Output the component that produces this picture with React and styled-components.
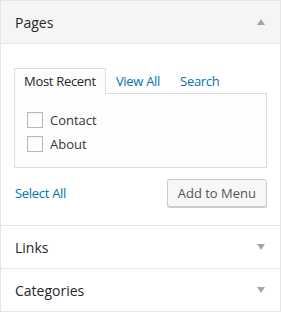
import styled, { createGlobalStyle } from "styled-components";

const Global = createGlobalStyle`
    body{
        margin: 0;
        background: #fff;
        font-family: "Open Sans", "Liberation Sans", sans-serif;
        font-size: 13px;
        color: #444;
    }
`;

const Box = styled.div`
    width: 281px;
    box-sizing: border-box;
    border: 1px solid #e5e5e5;
    background-color: #fff;
`;

const Section = styled.div`
    & + &{
        border-top: 1px solid #e5e5e5;
    }
`;

const Head = styled.div`
    display: flex;
    align-items: center;
    justify-content: space-between;
    height: 42px;
    padding: 0 15px 0 14px;
    background-color: ${p => p.$open ? "#f5f5f5" : "#fff"};
    border-bottom: ${p => p.$open ? "1px solid #e5e5e5" : "none"};
    h3{
        margin: 0;
        font-size: 14px;
        font-weight: 400;
        line-height: 21px;
        color: #23282d;
    }
`;

const Arrow = styled.span`
    width: 0;
    height: 0;
    border-left: 4px solid transparent;
    border-right: 4px solid transparent;
    ${p => p.$up
        ? "border-bottom: 6px solid #a0a5aa;"
        : "border-top: 6px solid #a0a5aa;"}
`;

const Content = styled.div`
    padding: 24px 13px 18px 13px;
`;

const Tabs = styled.ul`
    display: flex;
    margin: 0;
    padding: 0;
    list-style: none;
`;

const Tab = styled.li`
    position: relative;
    padding: 3px 9px;
    line-height: 19px;
    letter-spacing: -0.3px;
    border: 1px solid ${p => p.$active ? "#ddd" : "transparent"};
    border-bottom: none;
    background-color: ${p => p.$active ? "#fdfdfd" : "transparent"};
    margin-bottom: -1px;
    z-index: 1;
    color: ${p => p.$active ? "#23282d" : "#0073aa"};
`;

const Panel = styled.div`
    border: 1px solid #ddd;
    background-color: #fdfdfd;
    padding: 14px 12px 11px 12px;
`;

const Item = styled.label`
    display: flex;
    align-items: center;
    gap: 7px;
    height: 24px;
    color: #32373c;
    span{
        display: block;
        width: 14px;
        height: 14px;
        border: 1px solid #b4b9be;
        background-color: #fff;
        box-shadow: inset 0 1px 2px rgba(0,0,0,.07);
    }
`;

const Actions = styled.div`
    display: flex;
    align-items: center;
    justify-content: space-between;
    margin-top: 11px;
    padding-left: 1px;
    a{
        color: #0073aa;
        text-decoration: none;
        letter-spacing: -0.3px;
    }
`;

const Button = styled.button`
    height: 28px;
    padding: 0 10px 1px;
    border: 1px solid #ccc;
    border-radius: 3px;
    background-color: #f7f7f7;
    box-shadow: 0 1px 0 #ccc;
    font-family: inherit;
    font-size: 13px;
    color: #555;
    cursor: pointer;
`;

const pages = ["Contact", "About"];

export default function App(){
    return(
        <>
            <Global />
            <Box>
                <Section>
                    <Head $open>
                        <h3>Pages</h3>
                        <Arrow $up />
                    </Head>
                    <Content>
                        <Tabs>
                            <Tab $active>Most Recent</Tab>
                            <Tab>View All</Tab>
                            <Tab>Search</Tab>
                        </Tabs>
                        <Panel>
                            {pages.map(p => (
                                <Item key={p}><span />{p}</Item>
                            ))}
                        </Panel>
                        <Actions>
                            <a href="#">Select All</a>
                            <Button>Add to Menu</Button>
                        </Actions>
                    </Content>
                </Section>
                <Section>
                    <Head>
                        <h3>Links</h3>
                        <Arrow />
                    </Head>
                </Section>
                <Section>
                    <Head>
                        <h3>Categories</h3>
                        <Arrow />
                    </Head>
                </Section>
            </Box>
        </>
    );
}
